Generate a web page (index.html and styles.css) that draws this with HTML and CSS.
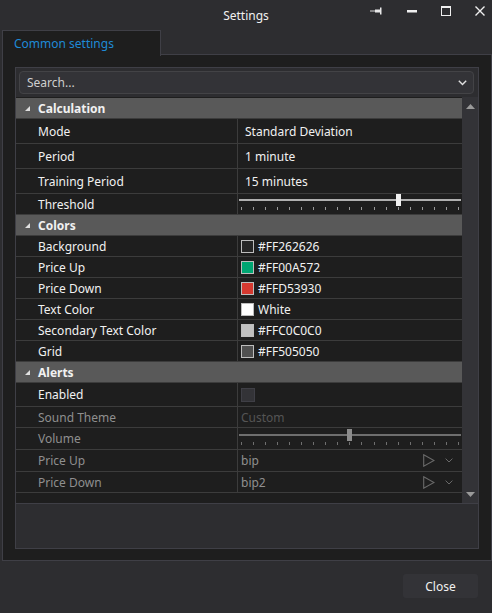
FILE: index.html
```html
<!DOCTYPE html>
<html lang="en">
<head>
    <meta charset="UTF-8">
    <meta name="viewport" content="width=device-width, initial-scale=1.0">
    <title>Settings</title>
    <link rel="stylesheet" href="styles.css">
</head>
<body>
    <div class="window">
        <!-- title bar -->
        <div class="titlebar">
            <span class="title">Settings</span>
            <div class="controls">
                <svg class="ctl pin" width="12" height="8" viewBox="0 0 12 8">
                    <rect x="0" y="3.5" width="6" height="1" fill="#d8d8d8"/>
                    <rect x="5" y="2.5" width="5" height="3" fill="#e8e8e8"/>
                    <rect x="10" y="0.5" width="1.5" height="7" fill="#e8e8e8"/>
                </svg>
                <svg class="ctl min" width="10" height="10" viewBox="0 0 10 10">
                    <rect x="0" y="4" width="10" height="2.5" fill="#f0f0f0"/>
                </svg>
                <svg class="ctl max" width="10" height="10" viewBox="0 0 10 10">
                    <rect x="0.5" y="1" width="9" height="8.5" fill="none" stroke="#f0f0f0" stroke-width="1"/>
                    <rect x="0" y="0" width="10" height="2" fill="#f0f0f0"/>
                </svg>
                <svg class="ctl close" width="10" height="10" viewBox="0 0 10 10">
                    <path d="M0.5 0.5 L9.5 9.5 M9.5 0.5 L0.5 9.5" stroke="#f0f0f0" stroke-width="1.4"/>
                </svg>
            </div>
        </div>

        <!-- tabs -->
        <div class="tabs">
            <div class="tab active">Common settings</div>
        </div>

        <div class="tab-panel">
            <div class="property-grid">
                <div class="search-row">
                    <div class="search">
                        <span>Search...</span>
                        <svg width="9" height="6" viewBox="0 0 9 6">
                            <path d="M0.8 0.8 L4.5 4.6 L8.2 0.8" fill="none" stroke="#e0e0e0" stroke-width="1.4"/>
                        </svg>
                    </div>
                </div>

                <div class="grid-body">
                    <div class="rows">
                        <div class="category"><span class="caret"></span>Calculation</div>
                        <div class="row tall">
                            <div class="name">Mode</div>
                            <div class="value text">Standard Deviation</div>
                        </div>
                        <div class="row tall">
                            <div class="name">Period</div>
                            <div class="value text">1 minute</div>
                        </div>
                        <div class="row tall">
                            <div class="name">Training Period</div>
                            <div class="value text">15 minutes</div>
                        </div>
                        <div class="row">
                            <div class="name">Threshold</div>
                            <div class="value">
                                <div class="slider">
                                    <div class="track"><div class="thumb" style="left: 71.5%;"></div></div>
                                    <div class="ticks"><i></i><i></i><i></i><i></i><i></i><i></i><i></i><i></i><i></i><i></i><i></i><i></i><i></i><i></i><i></i><i></i><i></i><i></i><i></i></div>
                                </div>
                            </div>
                        </div>

                        <div class="category"><span class="caret"></span>Colors</div>
                        <div class="row">
                            <div class="name">Background</div>
                            <div class="value swatch-value"><span class="swatch" style="background: #262626;"></span>#FF262626</div>
                        </div>
                        <div class="row">
                            <div class="name">Price Up</div>
                            <div class="value swatch-value"><span class="swatch" style="background: #00a572;"></span>#FF00A572</div>
                        </div>
                        <div class="row">
                            <div class="name">Price Down</div>
                            <div class="value swatch-value"><span class="swatch" style="background: #d53930;"></span>#FFD53930</div>
                        </div>
                        <div class="row">
                            <div class="name">Text Color</div>
                            <div class="value swatch-value"><span class="swatch" style="background: #ffffff;"></span>White</div>
                        </div>
                        <div class="row">
                            <div class="name">Secondary Text Color</div>
                            <div class="value swatch-value"><span class="swatch" style="background: #c0c0c0;"></span>#FFC0C0C0</div>
                        </div>
                        <div class="row">
                            <div class="name">Grid</div>
                            <div class="value swatch-value"><span class="swatch" style="background: #505050;"></span>#FF505050</div>
                        </div>

                        <div class="category"><span class="caret"></span>Alerts</div>
                        <div class="row enabled-row">
                            <div class="name">Enabled</div>
                            <div class="value swatch-value"><span class="checkbox"></span></div>
                        </div>
                        <div class="row disabled">
                            <div class="name">Sound Theme</div>
                            <div class="value plain custom">Custom</div>
                        </div>
                        <div class="row disabled mid">
                            <div class="name">Volume</div>
                            <div class="value">
                                <div class="slider off">
                                    <div class="track"><div class="thumb" style="left: 49.5%;"></div></div>
                                    <div class="ticks"><i></i><i></i><i></i><i></i><i></i><i></i><i></i><i></i><i></i><i></i><i></i><i></i><i></i><i></i><i></i><i></i><i></i><i></i><i></i></div>
                                </div>
                            </div>
                        </div>
                        <div class="row disabled mid">
                            <div class="name">Price Up</div>
                            <div class="value plain sound">
                                <span>bip</span>
                                <svg class="play" width="12" height="13" viewBox="0 0 12 13"><path d="M0.7 0.8 L11 6.5 L0.7 12.2 Z" fill="none" stroke="#6a6a6a" stroke-width="1.1"/></svg>
                                <svg class="drop" width="8" height="5" viewBox="0 0 8 5"><path d="M0.6 0.6 L4 4 L7.4 0.6" fill="none" stroke="#6a6a6a" stroke-width="1"/></svg>
                            </div>
                        </div>
                        <div class="row disabled">
                            <div class="name">Price Down</div>
                            <div class="value plain sound">
                                <span>bip2</span>
                                <svg class="play" width="12" height="13" viewBox="0 0 12 13"><path d="M0.7 0.8 L11 6.5 L0.7 12.2 Z" fill="none" stroke="#6a6a6a" stroke-width="1.1"/></svg>
                                <svg class="drop" width="8" height="5" viewBox="0 0 8 5"><path d="M0.6 0.6 L4 4 L7.4 0.6" fill="none" stroke="#6a6a6a" stroke-width="1"/></svg>
                            </div>
                        </div>
                    </div>
                    <div class="scrollbar">
                        <svg width="9" height="5" viewBox="0 0 9 5"><path d="M0 5 L4.5 0 L9 5 Z" fill="#9a9a9a"/></svg>
                        <svg width="9" height="5" viewBox="0 0 9 5"><path d="M0 0 L4.5 5 L9 0 Z" fill="#9a9a9a"/></svg>
                    </div>
                </div>

                <div class="description"></div>
            </div>
        </div>

        <div class="footer">
            <button class="btn">Close</button>
        </div>
    </div>
</body>
</html>
```

FILE: styles.css
```css
body {
    margin: 0;
    padding: 0;
    background-color: #2d2d30;
    font-family: "Noto Sans", "Open Sans", sans-serif;
    font-size: 12px;
    color: #f1f1f1;
}
.window {
    width: 492px;
    height: 613px;
    display: flex;
    flex-direction: column;
}
.titlebar {
    height: 30px;
    display: grid;
    grid-template-columns: 1fr auto 1fr;
    align-items: center;
}
.title {
    grid-column: 2;
    font-size: 12px;
    color: #f1f1f1;
}
.controls {
    grid-column: 3;
    justify-self: end;
    display: flex;
    align-items: center;
    padding-right: 7px;
    height: 30px;
    margin-top: -8px;
}
.ctl.pin {
    margin-right: 25px;
}
.ctl.min {
    margin-right: 24px;
}
.ctl.max {
    margin-right: 24px;
}
.tabs {
    height: 25px;
    display: flex;
    padding-left: 2px;
    position: relative;
    z-index: 1;
}
.tab {
    width: 146px;
    height: 25px;
    padding-left: 11px;
    background: #1e1e1e;
    border: 1px solid #3f3f46;
    border-bottom: none;
    color: #1e8ad6;
    line-height: 26px;
}
.tab-panel {
    margin-left: 2px;
    margin-top: -1px;
    height: 507px;
    box-sizing: border-box;
    background: #1e1e1e;
    border: 1px solid #3f3f46;
    padding: 12px;
}
.property-grid {
    height: 482px;
    box-sizing: border-box;
    border: 1px solid #3f3f46;
    background: #2d2d30;
    display: flex;
    flex-direction: column;
}
.search-row {
    padding: 3px 4px 3px 3px;
}
.search {
    height: 23px;
    box-sizing: border-box;
    border: 1px solid #434346;
    border-radius: 4px;
    background: #333337;
    display: flex;
    align-items: center;
    justify-content: space-between;
    padding: 0 6px 0 7px;
    color: #cfcfcf;
}
.grid-body {
    height: 406px;
    display: flex;
    background: #1e1e1e;
}
.rows {
    flex: 1;
    padding-top: 1px;
}
.category {
    height: 21px;
    box-sizing: border-box;
    background: #595959;
    border-bottom: 1px solid #3c3c3c;
    display: flex;
    align-items: center;
    font-weight: bold;
    padding-left: 22px;
}
.caret {
    width: 0;
    height: 0;
    border-left: 5px solid transparent;
    border-bottom: 5px solid #e0e0e0;
    margin-left: -13px;
    margin-right: 8px;
    margin-top: 1px;
}
.row {
    height: 21px;
    box-sizing: border-box;
    display: grid;
    grid-template-columns: 222px 1fr;
    border-bottom: 1px solid #3c3c3c;
}
.row.tall {
    height: 25px;
}
.row.mid {
    height: 22px;
}
.row.enabled-row {
    height: 24px;
}
.name {
    padding-left: 22px;
    display: flex;
    align-items: center;
    border-right: 1px solid #3c3c3c;
    color: #f1f1f1;
}
.row.disabled .name {
    color: #8f8f8f;
}
.value {
    display: flex;
    align-items: center;
    min-width: 0;
}
.value.text {
    padding-left: 7px;
}
.value.swatch-value {
    padding-left: 3px;
}
.value.plain {
    padding-left: 3px;
    color: #8f8f8f;
}
.value.custom {
    color: #555555;
}
.swatch {
    width: 11px;
    height: 11px;
    border: 1px solid #bdbdbd;
    margin-right: 4px;
}
.checkbox {
    width: 12px;
    height: 12px;
    background: #333337;
    border: 1px solid #3f3f46;
}
.sound span {
    flex: 1;
}
.sound .play {
    margin-right: 10px;
}
.sound .drop {
    margin-right: 9px;
}
.slider {
    width: 100%;
    padding: 0 1px 0 1px;
}
.track {
    height: 2px;
    background: #b0b0b0;
    position: relative;
    margin-top: 1px;
}
.thumb {
    position: absolute;
    top: -5px;
    width: 5px;
    height: 12px;
    background: #f0f0f0;
    margin-left: -2px;
}
.ticks {
    display: flex;
    justify-content: space-between;
    padding: 0 2px;
    margin-top: 6px;
}
.ticks i {
    width: 1px;
    height: 3px;
    background: #9a9a9a;
}
.slider.off .track {
    background: #6e6e6e;
}
.slider.off .thumb {
    background: #8c8c8c;
}
.slider.off .ticks i {
    background: #6e6e6e;
}
.scrollbar {
    width: 16px;
    background: #333337;
    display: flex;
    flex-direction: column;
    justify-content: space-between;
    align-items: center;
    padding: 7px 0 6px;
    box-sizing: border-box;
}
.description {
    flex: 1;
    border-top: 1px solid #3f3f46;
    background: #2d2d30;
}
.footer {
    flex: 1;
    display: flex;
    justify-content: flex-end;
    align-items: flex-start;
    padding: 13px 14px 0 0;
}
.btn {
    width: 75px;
    height: 24px;
    background: #333337;
    border: none;
    border-radius: 3px;
    color: #f1f1f1;
    font-family: "Noto Sans", "Open Sans", sans-serif;
    font-size: 12px;
}
```
